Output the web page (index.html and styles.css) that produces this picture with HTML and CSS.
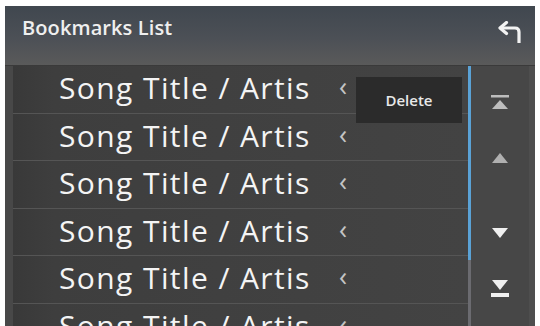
FILE: index.html
```html
<!DOCTYPE html>
<html>
<head>
<meta charset="utf-8">
<link rel="stylesheet" href="styles.css">
</head>
<body>
<div class="screen">
  <div class="header">
    <span class="title">Bookmarks List</span>
    <svg class="back" width="26" height="24" viewBox="0 0 26 24">
      <path d="M4 7 H18 Q22 7 22 11 V22" fill="none" stroke="#f2f2f2" stroke-width="3.2" stroke-linejoin="round"/>
      <path d="M9.5 1.5 L3 7 L9.5 12.5" fill="none" stroke="#f2f2f2" stroke-width="3.2" stroke-linejoin="round" stroke-linecap="round"/>
    </svg>
  </div>
  <div class="body">
    <div class="list">
      <div class="row"><span class="name">Song Title / Artis</span><span class="chev">&#x2039;</span></div>
      <div class="row"><span class="name">Song Title / Artis</span><span class="chev">&#x2039;</span></div>
      <div class="row"><span class="name">Song Title / Artis</span><span class="chev">&#x2039;</span></div>
      <div class="row"><span class="name">Song Title / Artis</span><span class="chev">&#x2039;</span></div>
      <div class="row"><span class="name">Song Title / Artis</span><span class="chev">&#x2039;</span></div>
      <div class="row"><span class="name">Song Title / Artis</span><span class="chev">&#x2039;</span></div>
      <div class="delete">Delete</div>
    </div>
    <div class="track"><div class="thumb"></div></div>
    <div class="side">
      <svg class="ic ic-top" width="20" height="16" viewBox="0 0 20 16"><rect x="1" y="0" width="18" height="2.5" fill="#bdbdbd"/><path d="M10 5 L18 14 H2 Z" fill="#bdbdbd"/></svg>
      <svg class="ic ic-up" width="16" height="10" viewBox="0 0 16 10"><path d="M8 0 L16 10 H0 Z" fill="#b0b0b0"/></svg>
      <svg class="ic ic-down" width="16" height="10" viewBox="0 0 16 10"><path d="M0 0 H16 L8 10 Z" fill="#f0f0f0"/></svg>
      <svg class="ic ic-bottom" width="20" height="18" viewBox="0 0 20 18"><path d="M2 0 H18 L10 10 Z" fill="#f0f0f0"/><rect x="1" y="13" width="18" height="4" fill="#f0f0f0"/></svg>
    </div>
  </div>
</div>
</body>
</html>
```
FILE: styles.css
```css
html, body {
  margin: 0;
  padding: 0;
  background: #ffffff;
}
.screen {
  margin: 6px 5px 0 5px;
  width: 530px;
  height: 320px;
  overflow: hidden;
  background: #484848;
  font-family: "Open Sans", "Lato", sans-serif;
  display: flex;
  flex-direction: column;
}
.header {
  height: 59px;
  flex: none;
  background: linear-gradient(#40474f, #4c5056 55%, #5a5a5a);
  display: flex;
  align-items: flex-start;
  justify-content: space-between;
  padding: 0 12px 0 17px;
  border-bottom: 1px solid #3a3a3a;
}
.title {
  color: #efefef;
  font-size: 20px;
  font-weight: 600;
  margin-top: 8px;
  letter-spacing: 0.1px;
}
.back {
  margin-top: 15px;
}
.body {
  flex: 1;
  display: flex;
  min-height: 0;
}
.list {
  position: relative;
  flex: 1;
  margin-left: 8px;
  background: #3c3c3c;
}
.row {
  height: 47.5px;
  box-sizing: border-box;
  border-bottom: 1px solid #555555;
  display: flex;
  align-items: flex-start;
  background: linear-gradient(90deg, #393939 0, #3e3e3e 40px, #434343 100%);
}
.name {
  margin-left: 46px;
  width: 270px;
  white-space: nowrap;
  overflow: hidden;
  color: #f4f4f4;
  font-size: 30px;
  line-height: 44px;
  letter-spacing: 1.4px;
}
.chev {
  margin-left: 10px;
  color: #c4c4c4;
  font-size: 27px;
  line-height: 40px;
}
.delete {
  position: absolute;
  left: 343px;
  top: 11px;
  width: 106px;
  height: 46px;
  background: #2b2b2b;
  color: #e8e8e8;
  font-size: 15px;
  font-weight: 600;
  display: flex;
  align-items: center;
  justify-content: center;
}
.track {
  width: 3px;
  flex: none;
  background: #6b6b70;
}
.thumb {
  height: 194px;
  background: #5aa2d6;
}
.side {
  width: 58px;
  flex: none;
  background: #474747;
  border-right: 6px solid #4e4e4e;
  display: flex;
  flex-direction: column;
  align-items: center;
}
.ic { display: block; }
.ic-top { margin-top: 29px; }
.ic-up { margin-top: 42px; }
.ic-down { margin-top: 65px; }
.ic-bottom { margin-top: 42px; }
```
